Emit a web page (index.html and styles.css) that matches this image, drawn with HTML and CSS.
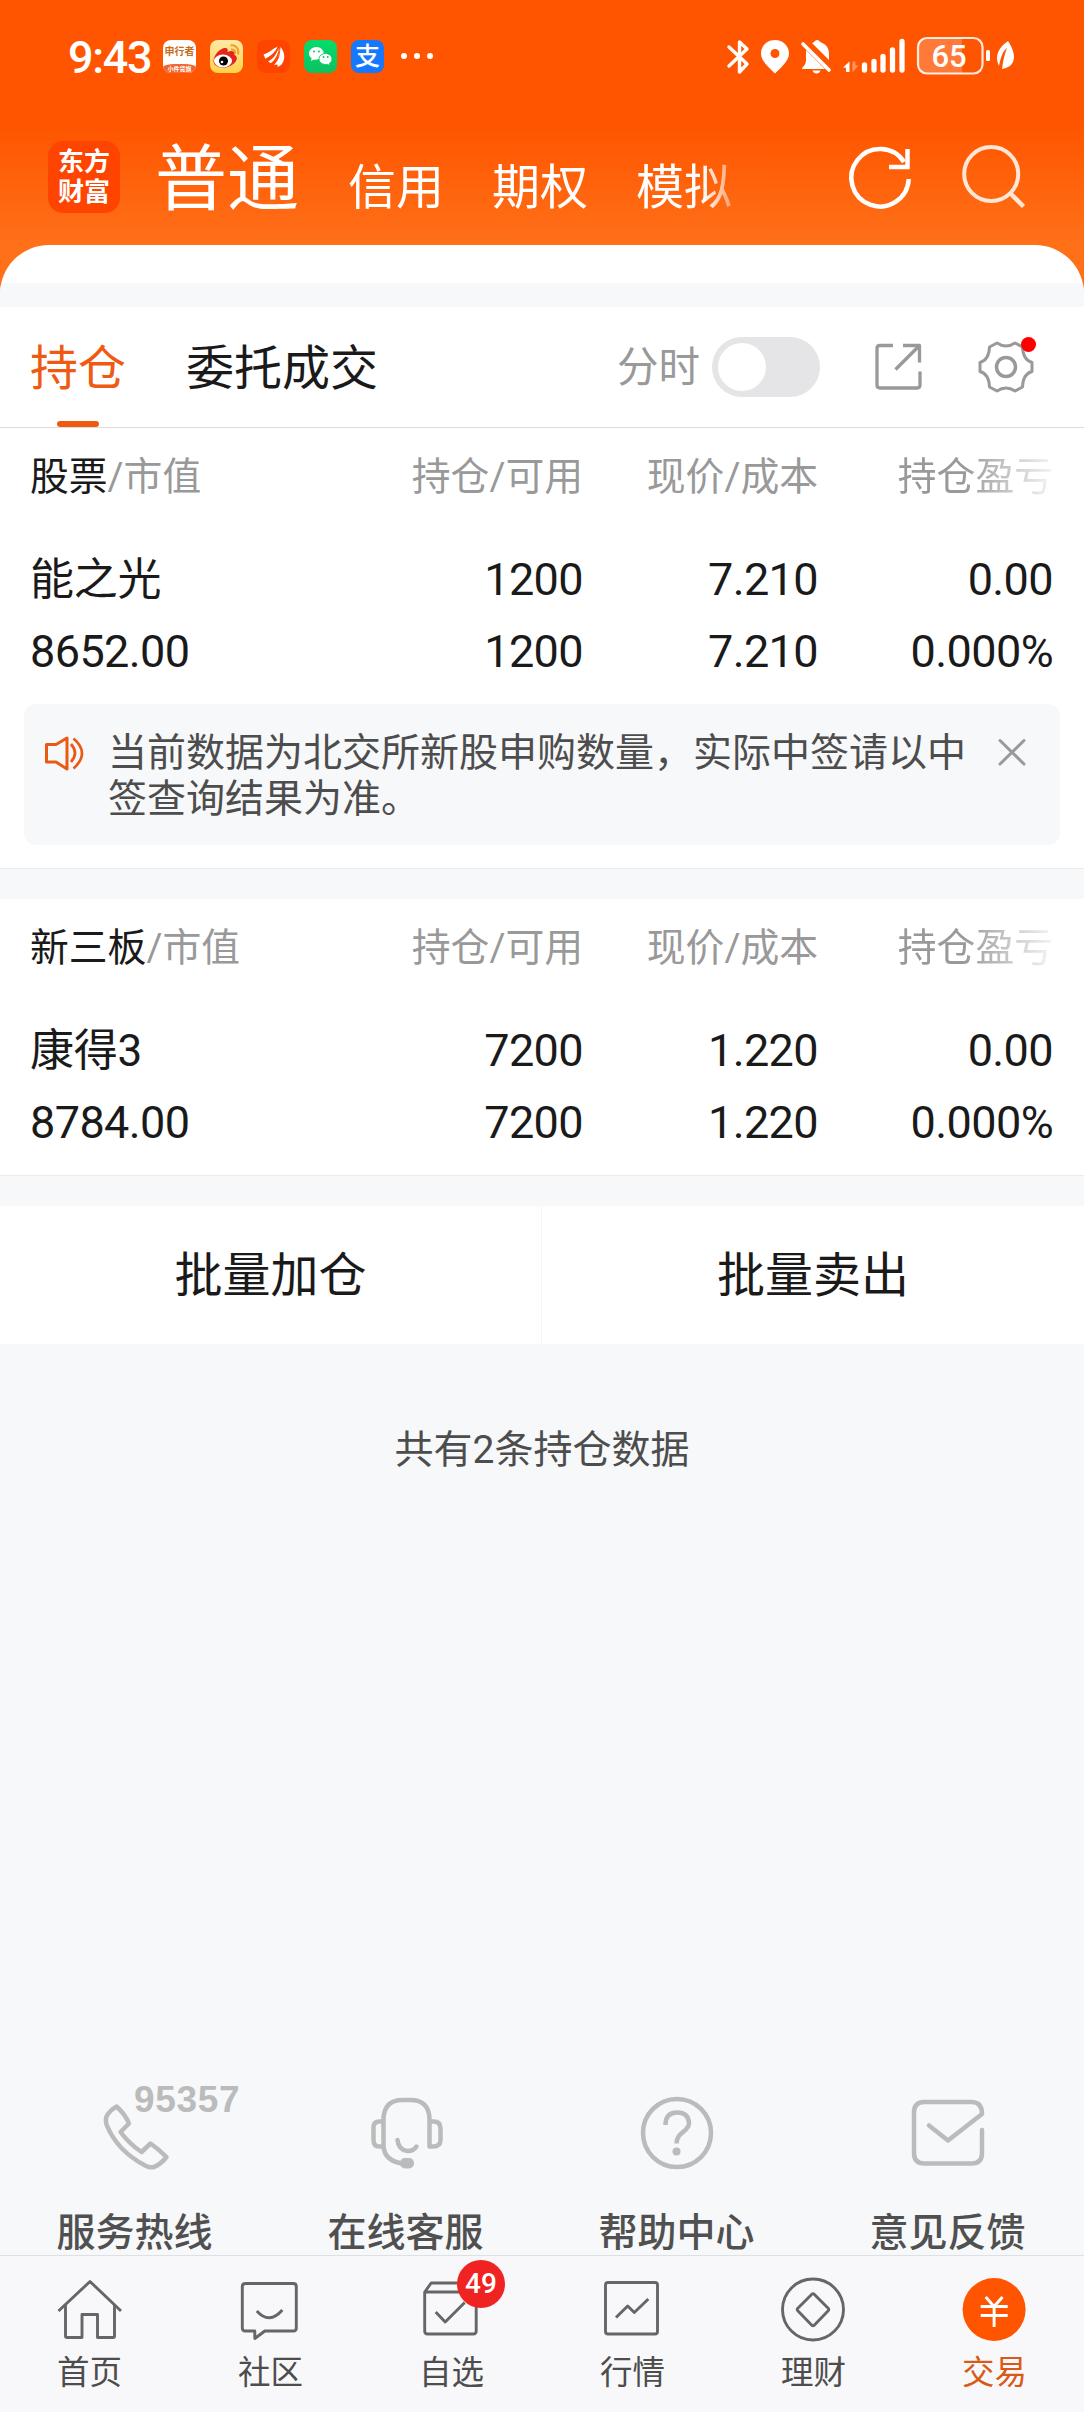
FILE: index.html
```html
<!DOCTYPE html>
<html lang="zh-CN">
<head>
<meta charset="utf-8">
<title>交易</title>
<link rel="stylesheet" href="styles.css">
</head>
<body>
<div class="app">
  <header class="top">
    <div class="status">
      <div class="status-left">
        <span class="clock">9:43</span>
        <span class="app-icon news"><b>申行者</b><i>小件贷旗</i></span>
        <svg class="app-icon weibo" viewBox="0 0 33 33"><path d="M3.500 21C4 14 11 7 16 8c2 .5 2 2 1.500 4 4-2 8-1 7 3 3 1 3 5 0 8-5 5-13 6-18 3-2-1-3-3-3-5z" fill="#e2261c"/><ellipse cx="13" cy="21" rx="9" ry="6.500" fill="#fff"/><circle cx="13.500" cy="21" r="4.500" fill="#000"/><circle cx="12" cy="22" r="1.300" fill="#fff"/><path d="M20.500 5.500c5-1 9 3 7.500 9M21 9.500c3-.6 4.800 1.500 4 4.300" fill="none" stroke="#f0a028" stroke-width="2"/></svg>
        <svg class="app-icon swift" viewBox="0 0 33 33"><path d="M6.500 14.500C12 13 15 9 21 6.500c-2 6-6 9-12.500 12.500zM11 21.500c6-3 8-7 11.500-15 1 6-2 12-8 17zM17 25c5-5 6-10 6.500-18 4 5 4.500 10 3 14-1 3-3 5-6 6 1-3-1-3-3.500-2z" fill="#fff"/><path d="M8.500 19.500C15 16 19 13 21.500 6.500M14 24c5-4 8-9 8.500-17" fill="none" stroke="#ff4400" stroke-width="1.200"/></svg>
        <svg class="app-icon wechat" viewBox="0 0 33 33"><path d="M12.500 7C8 7 5 10 5 13.500c0 2 1 3.600 2.600 4.800L7 21l3-1.500c3 .8 9-1 10-5C20 10 16.500 7 12.500 7z" fill="#fff"/><path d="M21.500 13.500c-3.600 0-6.500 2.400-6.500 5.500s2.900 5.500 6.500 5.500l1.900-.2 2.600 1.400-.6-2.300c1.600-1 2.600-2.600 2.600-4.400 0-3.100-2.900-5.500-6.500-5.500z" fill="#fff" stroke="#07c860" stroke-width=".9"/><g fill="#07c860"><circle cx="10" cy="11.500" r="1"/><circle cx="15" cy="11.500" r="1"/><circle cx="19.500" cy="17" r=".9"/><circle cx="23.700" cy="17" r=".9"/></g></svg>
        <span class="app-icon alipay">支</span>
        <span class="more"><i></i><i></i><i></i></span>
      </div>
      <svg class="status-right" width="300" height="50" viewBox="720 30 300 50">
        <g fill="none" stroke="#fff" stroke-width="3.400" stroke-linecap="round" stroke-linejoin="round">
          <path d="M729 47l18 17-7.500 8V42l7.500 7-18 17"/>
        </g>
        <path d="M775 40c-8 0-14 6-14 13.500 0 7.500 8 14 14 20 6-6 14-12.500 14-20C789 46 783 40 775 40z" fill="#fff"/><circle cx="775" cy="53.500" r="4.500" fill="#ff5500"/>
        <path d="M812 43c2 0 3-3 5-3s3 2 5 3c5 2 7 6 7 11v6z" fill="#fff"/><path d="M806 50l19 19h-23c0-3 4-3 4-9z" fill="#fff"/><path d="M803 44l26 26" stroke="#fff" stroke-width="3.600" stroke-linecap="round"/><path d="M812.500 70.500h8q-1 3-4 3t-4-3z" fill="#fff"/>
        <path d="M843 67.500h6.500V72h-3.500v-4.500zM843 67.500l6.500-6V68z" fill="#fff"/><path d="M852.500 61.500h3v4h3l-6 7z" fill="#ff9460"/>
        <g stroke="#fff" stroke-width="5.300" stroke-linecap="round"><path d="M864.500 65v5M874 61.500V70M883 56.500V70M892.500 50V70M902 41.500V70"/></g>
        <path d="M926 38h36v36h-36q-8 0-8-8V46q0-8 8-8z" fill="#fff" opacity=".22"/>
        <rect x="918" y="38" width="64.500" height="35.500" rx="9" fill="none" stroke="#fff" stroke-opacity=".88" stroke-width="2.200"/>
        <rect x="986" y="50" width="4" height="11" rx="1.500" fill="#fff"/>
        <text class="battery-text" x="949" y="67" text-anchor="middle">65</text>
        <path d="M1008 41c-9 6-14 15-9 25 2-10 4-15 8-18-2 5-4 12-5 21 13-2 16-13 6-28z" fill="#fff"/>
      </svg>
    </div>
    <div class="titlebar">
      <div class="logo">东方<br>财富</div>
      <nav class="accounts"><span class="current">普通</span><span>信用</span><span>期权</span><span>模拟</span></nav>
      <svg class="tools" width="200" height="80" viewBox="840 135 200 80" fill="none">
        <path d="M908.700 179A28.700 28.700 0 1 1 904 162" stroke="#fff" stroke-width="4.500"/><path d="M889 167h18.500v-18" stroke="#fff" stroke-width="4.500"/>
        <circle cx="991.200" cy="174" r="27" stroke="#ffe6d5" stroke-width="4"/><path d="M1010 193l13.500 13.500" stroke="#ffe6d5" stroke-width="4.500"/>
      </svg>
    </div>
  </header>

  <main class="panel">
    <div class="band"></div>
    <div class="tabs">
      <span class="tab active">持仓</span>
      <span class="tab">委托成交</span>
      <span class="minute">分时</span>
      <span class="switch"><i></i></span>
      <svg class="tab-tools" width="184" height="70" viewBox="866 332 184 70" fill="none" stroke="#999" stroke-width="3.300">
        <path d="M893 345.500h-13q-3 0-3 3V385q0 3 3 3h37q3 0 3-3v-13.500M903 345.500h16.500v17M919.500 345.500l-24 24" stroke-linejoin="round"/>
        <path d="M997 343Q1006 349 1015 343L1022.500 347Q1023 360 1032 362.500V371.500Q1023 374 1022.500 387L1015 391Q1006 385 997 391L989.500 387Q989 374 980 371.500V362.500Q989 360 989.500 347Z" stroke-width="3" stroke-linejoin="round"/>
        <circle cx="1006" cy="367" r="9.500" stroke-width="3.500"/><circle cx="1028.500" cy="344.500" r="7.500" fill="#f00" stroke="none"/>
      </svg>
    </div>

    <section class="holdings">
      <div class="row head"><span><b>股票</b>/市值</span><span>持仓/可用</span><span>现价/成本</span><span class="fade">持仓盈亏</span></div>
      <div class="row values"><span class="name">能之光</span><span>1200</span><span>7.210</span><span>0.00</span><span>8652.00</span><span>1200</span><span>7.210</span><span>0.000%</span></div>
      <div class="notice">
        <svg width="44" height="44" viewBox="42 731 44 44" fill="none" stroke="#eb5a14" stroke-width="3" stroke-linejoin="round"><path d="M46.500 744.500H56L67 738v31l-11-7h-9.500z"/><path d="M71 744q8 9 0 18M73.500 738.500q17 14.500 0 30" stroke-width="2.700"/></svg>
        <p>当前数据为北交所新股申购数量，实际中签请以中签查询结果为准。</p>
        <svg width="34" height="34" viewBox="994 735 34 34" fill="none" stroke="#999" stroke-width="3" stroke-linecap="round"><path d="M1000 740.500l24 23.500M1024 740.500L1000 764"/></svg>
      </div>
    </section>

    <section class="holdings">
      <div class="row head"><span><b>新三板</b>/市值</span><span>持仓/可用</span><span>现价/成本</span><span class="fade">持仓盈亏</span></div>
      <div class="row values"><span class="name">康得3</span><span>7200</span><span>1.220</span><span>0.00</span><span>8784.00</span><span>7200</span><span>1.220</span><span>0.000%</span></div>
    </section>

    <div class="batch"><span>批量加仓</span><span>批量卖出</span></div>
    <p class="count">共有2条持仓数据</p>
  </main>

  <div class="services">
    <div class="service"><span class="hotline">95357</span>
      <svg viewBox="0 2080 271 100"><path d="M116.500 2106.500q8.500 7.500 12.500 17l-8.500 8.500q9 12 21 20l9-8.500q8 5.500 16 13.500-6 7.500-12.500 10-3.500 1-8-1-29-15-39.500-41.500-1.500-6 1-10 3.500-5 9-8z"/></svg><span>服务热线</span></div>
    <div class="service">
      <svg viewBox="271 2080 271 100"><path d="M383.500 2147v-27q0-20 19-20h8q19 0 19 20v26.500h4q7 0 7-7v-11q0-7-7-7h-4M383.500 2121.500h-4q-6 0-6 6V2140q0 6.500 6 6.500h4q1 14 18.500 17M397.500 2140q1 10 10 11 6 0 9-4.500"/><rect x="400" y="2158" width="14" height="10.500" rx="5" fill="#bbb" stroke="none"/></svg><span>在线客服</span></div>
    <div class="service">
      <svg viewBox="542 2080 271 100"><circle cx="677" cy="2133" r="34"/><path stroke-linecap="butt" d="M665.500 2125q0-12.500 11.500-12.500t12 10.500c0 9-12.500 9-12.500 20.500"/><circle cx="676.500" cy="2151.500" r="4" fill="#bbb" stroke="none"/></svg><span>帮助中心</span></div>
    <div class="service">
      <svg viewBox="813 2080 271 100"><path d="M982 2130v23q0 10.500-10.500 10.500h-47q-10.500 0-10.500-10.500v-40.500q0-10.500 10.500-10.500h47q10.500 0 10.500 12l-34 26.500-19-15"/></svg><span>意见反馈</span></div>
  </div>

  <nav class="bottom">
    <div class="item"><svg viewBox="0 2256 181 90"><path d="M58.500 2311L90 2281.500l31 29.500M65.500 2305v31q0 1.500 1.500 1.500h15V2314.500h15.500v23H113q1.500 0 1.500-1.500v-31"/></svg><span>首页</span></div>
    <div class="item"><svg viewBox="181.200 2256 181 90"><path d="M246 2283.500h47.500q3 0 3 3V2328q0 3-3 3H265l-10 7.500v-7.500h-9.500q-3 0-3-3v-41.500q0-3 3.500-3zM257 2311q12.500 14 25.500-1"/></svg><span>社区</span></div>
    <div class="item"><svg viewBox="362.300 2256 181 90"><path d="M425 2292l6.500-9H469l7.500 9V2331q0 3-3 3H428q-3 0-3-3zh51.500M436 2312l9.500 10 19.500-19.500"/></svg><em class="badge">49</em><span>自选</span></div>
    <div class="item"><svg viewBox="543 2256 181 90"><rect x="605.500" y="2282.500" width="52" height="51.500" rx="2.500"/><path d="M616 2317.500l11.700-11.500 6.600 6.500 14-13.500"/></svg><span>行情</span></div>
    <div class="item"><svg viewBox="723.700 2256 181 90"><circle cx="812.700" cy="2309.500" r="30.500"/><path d="M811.500 2294.300q1.200-1.200 2.400 0l14 14q1.200 1.200 0 2.400l-14 14.500q-1.200 1.200-2.400 0l-14-14.500q-1.200-1.200 0-2.400z"/></svg><span>理财</span></div>
    <div class="item on"><svg viewBox="904.300 2256 181 90"><circle class="coin" cx="993.400" cy="2309.500" r="31.500"/><path class="yuan" d="M985 2297l8.400 9.500 8.400-9.500M980 2306.500h27M980 2315.500h27M993.400 2306.500v20.500"/></svg><span>交易</span></div>
  </nav>
</div>
</body>
</html>
```
FILE: styles.css
```css
* { box-sizing: border-box; }
body { margin: 0; font-family: Roboto, "Noto Sans CJK SC", sans-serif; color: #1a1a1a; }
i, em { font-style: normal; }
p { margin: 0; }
svg { display: block; }
.app { width: 1084px; height: 2412px; display: flex; flex-direction: column; overflow: hidden;
  background: linear-gradient(#ff5500 0, #ff5500 125px, #ff7019 245px, #ff7019 300px, #f7f8fa 300px); }

/* status bar and title bar */
.top { height: 245px; color: #fff; flex: none; }
.status { height: 110px; padding: 0 64px 0 68px; display: flex; justify-content: space-between; align-items: flex-start; }
.status-left { display: flex; align-items: flex-start; padding-top: 40px; gap: 14px; }
.clock { width: 81px; font-size: 45px; line-height: 36px; font-weight: 500; letter-spacing: -1.300px; white-space: nowrap; }
.app-icon { width: 33px; height: 33px; border-radius: 8px; overflow: hidden; flex: none; }
.news { background: #fff; display: flex; flex-direction: column; justify-content: space-between; text-align: center; }
.news b { font-size: 10px; line-height: 24px; color: #c96a16; white-space: nowrap; font-weight: 700; }
.news i { background: #f0642d; font-size: 6px; line-height: 9px; white-space: nowrap; font-weight: 700; border-radius: 12px 12px 0 0 / 3px 3px 0 0; }
.weibo { background: linear-gradient(#ffe9a8, #ffd24a); }
.swift { background: #ff4400; }
.wechat { background: linear-gradient(#04dc6c, #0cc160); }
.alipay { background: #1677ff; font-size: 25px; line-height: 33px; text-align: center; font-weight: 500; }
.more { display: flex; gap: 7px; padding: 13px 0 0 4px; }
.more i { width: 6px; height: 6px; border-radius: 50%; background: #fff; }
.more { margin-left: -1px; }
.status-right { margin-top: 30px; }
.battery-text { font-size: 31px; font-weight: 500; fill: #fff; }
.titlebar { height: 135px; padding: 0 44px 0 48px; display: flex; align-items: flex-start; }
.logo { width: 72px; height: 72px; margin-top: 31px; padding-top: 6px; border-radius: 15px; background: #ff4400; font-size: 26px; line-height: 30px; font-weight: 700; text-align: center; }
.accounts { width: 595px; margin-left: 35px; padding-top: 22px; display: flex; align-items: baseline; gap: 48px; font-size: 48px; line-height: 96px; white-space: nowrap;
  -webkit-mask-image: linear-gradient(90deg, #000 548px, transparent 595px); mask-image: linear-gradient(90deg, #000 548px, transparent 595px); }
.accounts .current { font-size: 72px; margin-right: 1px; }
.tools { margin: 25px 0 0 90px; flex: none; }

/* holdings panel */
.panel { background: #fff; border-radius: 49px 49px 0 0; padding-top: 38px; overflow: hidden; flex: none; }
.band { height: 24px; background: #f7f8fa; }
.tabs { height: 121px; padding: 0 34px 0 30px; border-bottom: 1px solid #dcdcdc; display: flex; align-items: center; font-size: 48px; }
.tab { position: relative; height: 120px; line-height: 123px; margin-right: 60px; }
.tab.active { color: #f05a10; }
.active::after { content: ""; position: absolute; left: 27px; bottom: 0; width: 42px; height: 6px; border-radius: 3px; background: #f05a10; }
.minute { margin-left: auto; font-size: 41.500px; line-height: 117px; color: #999; }
.switch { width: 108px; height: 60px; border-radius: 30px; background: #e5e5e7; padding: 6px; margin: 0 46px 0 12px; }
.switch i { display: block; width: 48px; height: 48px; border-radius: 50%; background: #fff; }
.tab-tools { flex: none; }
.holdings { border-bottom: 1px solid #ebebeb; padding-bottom: 17px; }
.holdings + .holdings { border-top: 30px solid #f7f8fa; }
.row { display: grid; grid-template-columns: 301px 252px 235px 235px; padding-left: 30px; text-align: right; white-space: nowrap; }
.row > :nth-child(4n+1) { text-align: left; }
.head { font-size: 38.800px; line-height: 98px; height: 96px; color: #999; }
.head b { font-weight: 400; color: #1a1a1a; }
.fade { -webkit-mask-image: linear-gradient(90deg, #000 145px, transparent 245px); mask-image: linear-gradient(90deg, #000 145px, transparent 245px); }
.values { padding-top: 20px; margin-bottom: -1px; font-size: 45px; line-height: 72px; letter-spacing: -.6px; }
.values .name { font-size: 44px; letter-spacing: -.2px; }
.notice { margin: 17px 24px 6px; height: 141px; padding: 25px 32px 0 18px; border-radius: 12px; background: #f7f8fa; display: flex; align-items: flex-start; justify-content: space-between; }
.notice p { width: 862px; margin: 1px auto 0 22px; font-size: 39px; line-height: 46px; color: #4d4d4d; }
.notice svg { flex: none; margin-top: 2px; }
.notice svg:last-child { margin-top: 6px; }
.batch { display: grid; grid-template-columns: 541px 543px; border-top: 30px solid #f7f8fa; height: 168px; font-size: 48px; line-height: 140px; text-align: center; }
.batch span { height: 138px; }
.batch span + span { border-left: 1px solid #f4f4f6; }
.count { height: 210px; background: #f7f8fa; text-align: center; font-size: 39px; line-height: 213px; color: #4d4d4d; }

/* service shortcuts */
.services { margin-top: auto; display: grid; grid-template-columns: repeat(4, 1fr); text-align: center; font-size: 39px; line-height: 47px; font-weight: 500; color: #505050; }
.service { position: relative; }
.service svg { width: 271px; height: 100px; margin-bottom: 30px; fill: none; stroke: #bbb; stroke-width: 4.500px; stroke-linecap: round; stroke-linejoin: round; }
.service > span:last-child { display: block; height: 45px; margin-left: -2px; }
.hotline { position: absolute; left: 134px; top: -3px; font: 700 37px/46px "Liberation Sans", sans-serif; letter-spacing: .7px; color: #bbb; }

/* bottom navigation */
.bottom { height: 157px; flex: none; border-top: 1px solid #dfe0e4; background: #f8f8fa; display: grid; grid-template-columns: repeat(6, 1fr); text-align: center; font-size: 32.500px; line-height: 50px; color: #4d4d4d; }
.item { position: relative; }
.item svg { width: 181px; height: 90px; margin-bottom: 2px; fill: none; stroke: #666; stroke-width: 2.900px; stroke-linejoin: round; }
.item > span { margin-left: -2px; }
.badge { position: absolute; left: 95px; top: 4px; width: 48px; height: 48px; border-radius: 50%; background: #f02323; color: #fff; font-size: 28px; line-height: 48px; font-weight: 500; }
.item .coin { fill: #ff5500; stroke: none; }
.item .yuan { stroke: #fff; stroke-linejoin: miter; }
.on { color: #d95a18; }
```
